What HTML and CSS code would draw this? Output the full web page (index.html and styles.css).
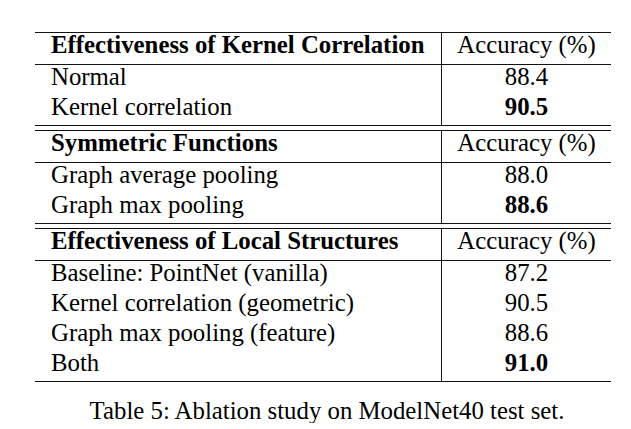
FILE: index.html
```html
<!DOCTYPE html>
<html>
<head>
<meta charset="utf-8">
<title>Table 5</title>
<link rel="stylesheet" href="styles.css">
</head>
<body>
<div class="figure">
  <div class="tbl">
    <div class="section">
      <div class="row head"><div class="c1">Effectiveness of Kernel Correlation</div><div class="c2">Accuracy (%)</div></div>
      <div class="row"><div class="c1">Normal</div><div class="c2">88.4</div></div>
      <div class="row"><div class="c1">Kernel correlation</div><div class="c2"><b>90.5</b></div></div>
    </div>
    <div class="section">
      <div class="row head"><div class="c1">Symmetric Functions</div><div class="c2">Accuracy (%)</div></div>
      <div class="row"><div class="c1">Graph average pooling</div><div class="c2">88.0</div></div>
      <div class="row"><div class="c1">Graph max pooling</div><div class="c2"><b>88.6</b></div></div>
    </div>
    <div class="section">
      <div class="row head"><div class="c1">Effectiveness of Local Structures</div><div class="c2">Accuracy (%)</div></div>
      <div class="row"><div class="c1">Baseline: PointNet (vanilla)</div><div class="c2">87.2</div></div>
      <div class="row"><div class="c1">Kernel correlation (geometric)</div><div class="c2">90.5</div></div>
      <div class="row"><div class="c1">Graph max pooling (feature)</div><div class="c2">88.6</div></div>
      <div class="row"><div class="c1">Both</div><div class="c2"><b>91.0</b></div></div>
    </div>
  </div>
  <div class="caption">Table 5: Ablation study on ModelNet40 test set.</div>
</div>
</body>
</html>
```
FILE: styles.css
```css
html, body {
  margin: 0;
  padding: 0;
  background: #ffffff;
}
body {
  font-family: "Liberation Serif", "Times New Roman", serif;
  font-size: 24.8px;
  color: #000000;
}
.figure {
  width: 576px;
  margin-left: 35px;
  padding-top: 32px;
}
.tbl {
  display: flex;
  flex-direction: column;
  gap: 4px;
}
.section {
  border-top: 1px solid #111111;
  border-bottom: 1px solid #111111;
}
.row {
  display: grid;
  grid-template-columns: 407px 1fr;
}
.row > div {
  line-height: 24px;
  padding-bottom: 6px;
  white-space: nowrap;
}
.row.head {
  border-bottom: 1px solid #111111;
}
.row.head > div {
  padding-bottom: 7px;
}
.row.head .c1 {
  font-weight: bold;
}
.c1 {
  box-sizing: border-box;
  padding-left: 16px;
  border-right: 1px solid #111111;
}
.c2 {
  text-align: center;
}
.caption {
  margin-top: 17px;
  padding-left: 8px;
  line-height: 24px;
  text-align: center;
  white-space: nowrap;
}
```
